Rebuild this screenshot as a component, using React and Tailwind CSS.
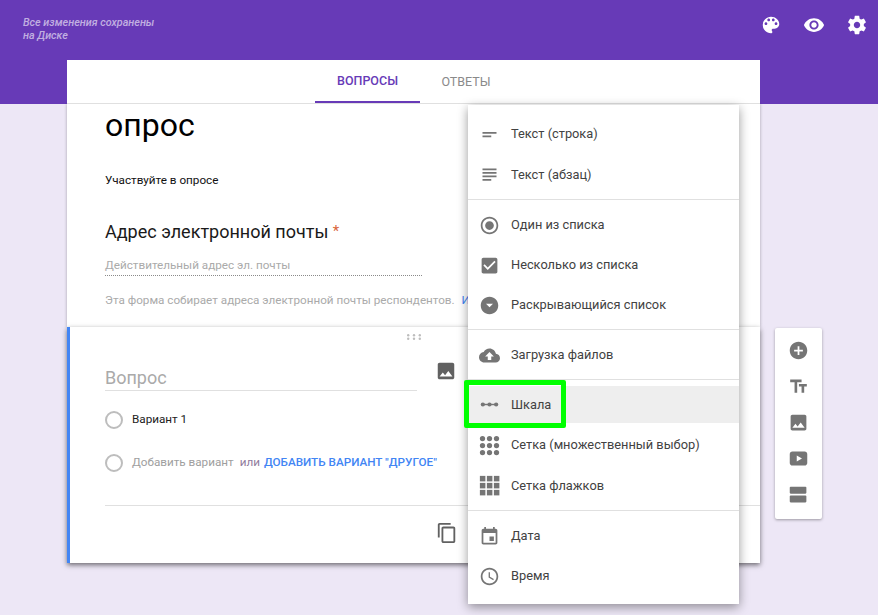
import React from 'react';

const Icon = ({ d, className = 'w-[21px] h-[21px] fill-[#757575]', children }) => (
  <svg viewBox="0 0 24 24" className={`shrink-0 ${className}`}>
    {d ? <path d={d} /> : children}
  </svg>
);

const icons = {
  palette: 'M12 3c-4.97 0-9 4.03-9 9s4.03 9 9 9c.83 0 1.5-.67 1.5-1.5 0-.39-.15-.74-.39-1.01-.23-.26-.38-.61-.38-.99 0-.83.67-1.5 1.5-1.5H16c2.76 0 5-2.24 5-5 0-4.42-4.03-8-9-8zm-5.5 9c-.83 0-1.5-.67-1.5-1.5S5.67 9 6.5 9 8 9.67 8 10.5 7.33 12 6.5 12zm3-4C8.67 8 8 7.33 8 6.5S8.67 5 9.5 5s1.5.67 1.5 1.5S10.33 8 9.5 8zm5 0c-.83 0-1.5-.67-1.5-1.5S13.67 5 14.5 5s1.5.67 1.5 1.5S15.33 8 14.5 8zm3 4c-.83 0-1.5-.67-1.5-1.5S16.67 9 17.5 9s1.5.67 1.5 1.5-.67 1.5-1.5 1.5z',
  eye: 'M12 4.5C7 4.5 2.73 7.61 1 12c1.73 4.39 6 7.5 11 7.5s9.27-3.11 11-7.5c-1.73-4.39-6-7.5-11-7.5zM12 17c-2.76 0-5-2.24-5-5s2.24-5 5-5 5 2.24 5 5-2.24 5-5 5zm0-8c-1.66 0-3 1.34-3 3s1.34 3 3 3 3-1.34 3-3-1.34-3-3-3z',
  gear: 'M19.43 12.98c.04-.32.07-.64.07-.98s-.03-.66-.07-.98l2.11-1.65c.19-.15.24-.42.12-.64l-2-3.46c-.12-.22-.39-.3-.61-.22l-2.49 1c-.52-.4-1.08-.73-1.69-.98l-.38-2.65C14.46 2.18 14.25 2 14 2h-4c-.25 0-.46.18-.49.42l-.38 2.65c-.61.25-1.17.59-1.69.98l-2.49-1c-.23-.09-.49 0-.61.22l-2 3.46c-.13.22-.07.49.12.64l2.11 1.65c-.04.32-.07.65-.07.98s.03.66.07.98l-2.11 1.65c-.19.15-.24.42-.12.64l2 3.46c.12.22.39.3.61.22l2.49-1c.52.4 1.08.73 1.69.98l.38 2.65c.03.24.24.42.49.42h4c.25 0 .46-.18.49-.42l.38-2.65c.61-.25 1.17-.59 1.69-.98l2.49 1c.23.09.49 0 .61-.22l2-3.46c.12-.22.07-.49-.12-.64l-2.11-1.65zM12 15.5c-1.93 0-3.5-1.57-3.5-3.5s1.57-3.5 3.5-3.5 3.5 1.57 3.5 3.5-1.57 3.5-3.5 3.5z',
  shortText: 'M4 9h16v2H4zm0 4h10v2H4z',
  subject: 'M14 17H4v2h10v-2zm6-8H4v2h16V9zM4 15h16v-2H4v2zM4 5v2h16V5H4z',
  radio: 'M12 7c-2.76 0-5 2.24-5 5s2.24 5 5 5 5-2.24 5-5-2.24-5-5-5zm0-5C6.48 2 2 6.48 2 12s4.48 10 10 10 10-4.48 10-10S17.52 2 12 2zm0 18c-4.42 0-8-3.58-8-8s3.58-8 8-8 8 3.58 8 8-3.58 8-8 8z',
  checkBox: 'M19 3H5c-1.11 0-2 .9-2 2v14c0 1.1.89 2 2 2h14c1.11 0 2-.9 2-2V5c0-1.1-.89-2-2-2zm-9 14l-5-5 1.41-1.41L10 14.17l7.59-7.59L19 8l-9 9z',
  dropCircle: 'M12 2C6.48 2 2 6.48 2 12s4.48 10 10 10 10-4.48 10-10S17.52 2 12 2zm0 12l-4-4h8l-4 4z',
  cloud: 'M19.35 10.04C18.67 6.59 15.64 4 12 4 9.11 4 6.6 5.64 5.35 8.04 2.34 8.36 0 10.91 0 14c0 3.31 2.69 6 6 6h13c2.76 0 5-2.24 5-5 0-2.64-2.05-4.78-4.65-4.96zM14 13v4h-4v-4H7l5-5 5 5h-3z',
  event: 'M17 12h-5v5h5v-5zM16 1v2H8V1H6v2H5c-1.11 0-1.99.9-1.99 2L3 19c0 1.1.89 2 2 2h14c1.1 0 2-.9 2-2V5c0-1.1-.9-2-2-2h-1V1h-2zm3 18H5V8h14v11z',
  clock: 'M11.99 2C6.47 2 2 6.48 2 12s4.47 10 9.99 10C17.52 22 22 17.52 22 12S17.52 2 11.99 2zM12 20c-4.42 0-8-3.58-8-8s3.58-8 8-8 8 3.58 8 8-3.58 8-8 8zm.5-13H11v6l5.25 3.15.75-1.23-4.5-2.67z',
  add: 'M12 2C6.48 2 2 6.48 2 12s4.48 10 10 10 10-4.48 10-10S17.52 2 12 2zm5 11h-4v4h-2v-4H7v-2h4V7h2v4h4v2z',
  title: 'M2.500 4v3h5v12h3V7h5V4h-13zm19 5h-9v3h3v7h3v-7h3V9z',
  image: 'M21 19V5c0-1.1-.9-2-2-2H5c-1.1 0-2 .9-2 2v14c0 1.1.9 2 2 2h14c1.1 0 2-.9 2-2zM8.5 13.5l2.5 3.01L14.5 12l4.5 6H5l3.5-4.5z',
  video: 'M19 4H5C3.3 4 2 5.3 2 7v10c0 1.7 1.300 3 3 3h14c1.700 0 3-1.300 3-3V7c0-1.700-1.300-3-3-3zM10 15.500v-7l6 3.500-6 3.500z',
  agenda: 'M20 13H3c-.55 0-1 .45-1 1v6c0 .55.45 1 1 1h17c.55 0 1-.45 1-1v-6c0-.55-.45-1-1-1zm0-10H3c-.55 0-1 .45-1 1v6c0 .55.45 1 1 1h17c.55 0 1-.45 1-1V4c0-.55-.45-1-1-1z',
  copy: 'M16 1H4c-1.1 0-2 .9-2 2v14h2V3h12V1zm3 4H8c-1.1 0-2 .9-2 2v14c0 1.1.9 2 2 2h11c1.1 0 2-.9 2-2V7c0-1.1-.9-2-2-2zm0 16H8V7h11v14z',
};

const ScaleIcon = () => (
  <Icon>
    <rect x="3" y="11.200" width="18" height="1.600" />
    <circle cx="4.400" cy="12" r="2.400" />
    <circle cx="12" cy="12" r="2.400" />
    <circle cx="19.600" cy="12" r="2.400" />
  </Icon>
);

const GRID = [4, 12, 20];

const DotsIcon = () => (
  <Icon>
    {GRID.map((y) => GRID.map((x) => <circle key={`${x}-${y}`} cx={x} cy={y} r="3" />))}
  </Icon>
);

const SquaresIcon = () => (
  <Icon>
    {GRID.map((y) => GRID.map((x) => <rect key={`${x}-${y}`} x={x - 3} y={y - 3} width="6.300" height="6.300" />))}
  </Icon>
);

const MenuRow = ({ icon, label, className = 'h-10', labelClass = '' }) => (
  <div className={`flex items-center pl-[11px] gap-[11px] text-[12.800px] text-[#424242] ${className}`}>
    {icon}
    <span className={labelClass}>{label}</span>
  </div>
);

const Divider = () => <div className="h-px bg-[#e0e0e0]" />;

const TypeMenu = () => (
  <div className="absolute left-[468px] top-[105px] z-20 w-[271px] h-[499px] bg-white shadow-[0_3px_10px_rgba(0,0,0,0.4)]">
    <div className="pt-[9px] pb-[5px]">
      <MenuRow icon={<Icon d={icons.shortText} />} label="Текст (строка)" />
      <MenuRow icon={<Icon d={icons.subject} />} label="Текст (абзац)" labelClass="translate-y-px" />
    </div>
    <Divider />
    <div className="pt-[5px] pb-[4px]">
      <MenuRow icon={<Icon d={icons.radio} />} label="Один из списка" />
      <MenuRow icon={<Icon d={icons.checkBox} />} label="Несколько из списка" />
      <MenuRow icon={<Icon d={icons.dropCircle} />} label="Раскрывающийся список" />
    </div>
    <Divider />
    <div className="pt-[5px] pb-[4px]">
      <MenuRow icon={<Icon d={icons.cloud} />} label="Загрузка файлов" />
    </div>
    <Divider />
    <div className="pt-[6px] pb-[5px]">
      <MenuRow icon={<ScaleIcon />} label="Шкала" className="h-[37px] mb-[2px] bg-[#eeeeee]" />
      <MenuRow icon={<DotsIcon />} label="Сетка (множественный выбор)" />
      <MenuRow icon={<SquaresIcon />} label="Сетка флажков" labelClass="translate-y-px" />
    </div>
    <Divider />
    <div className="pt-[5px]">
      <MenuRow icon={<Icon d={icons.event} />} label="Дата" />
      <MenuRow icon={<Icon d={icons.clock} />} label="Время" />
    </div>
    {/* annotation round the selected row */}
    <div className="absolute left-[-4px] top-[275px] w-[102px] h-[48px] rounded-[2px] border-[5px] border-[#00ff00]" />
  </div>
);

const RadioCircle = () => <div className="w-[18px] h-[18px] rounded-full border-2 border-[#bdbdbd] shrink-0" />;

const EmailCard = () => (
  <div className="relative z-0 h-[223px] bg-white pl-[38px] shadow-[0_0_3px_rgba(0,0,0,0.3)]">
    <div className="text-[32px] leading-[42px] text-black">опрос</div>
    <div className="mt-[26px] text-[11.700px] leading-4 text-[#111]">Участвуйте в опросе</div>
    <div className="mt-[31px] text-[18px] leading-6 text-[#1a1a1a]">
      Адрес электронной почты <span className="text-[15px] align-[2px] text-[#d9653b]">*</span>
    </div>
    <div className="mt-[13px] w-[317px] h-[19px] border-b border-dotted border-[#8a8a8a] text-[11.700px] leading-4 text-[#aaaaaa]">
      Действительный адрес эл. почты
    </div>
    <div className="mt-[16px] text-[11.700px] leading-4 text-[#aaaaaa] whitespace-nowrap">
      Эта форма собирает адреса электронной почты респондентов. <span className="ml-1 text-[#4285f4]">И</span>
    </div>
  </div>
);

const QuestionCard = () => (
  <div className="relative z-10 h-[236px] bg-white border-l-[3px] border-[#4285f4] shadow-[0_2px_5px_rgba(0,0,0,0.55)]">
    <div className="flex justify-center w-[687px] pt-[7px]">
      <svg viewBox="0 0 14 6" className="w-[14px] h-[6px] fill-[#bdbdbd]">
        {[1.2, 7, 12.8].map((x) => [1.2, 4.8].map((y) => <circle key={`${x}-${y}`} cx={x} cy={y} r="1.200" />))}
      </svg>
    </div>
    <div className="pl-[35px]">
      <div className="flex mt-[12px]">
        <div className="w-[312px] h-[39px] pt-[16px] border-b border-[#e0e0e0] text-[18px] leading-[20px] text-[#aaaaaa]">Вопрос</div>
        <Icon d={icons.image} className="w-[22px] h-[22px] fill-[#616161] ml-[18px] mt-[8px]" />
      </div>
      <div className="flex items-center gap-[9px] mt-[20px] h-[18px] text-[11.700px] text-[#212121]">
        <RadioCircle />
        <span>Вариант 1</span>
      </div>
      <div className="flex items-center gap-[9px] mt-[25px] h-[18px] text-[11.700px] whitespace-nowrap">
        <RadioCircle />
        <span className="text-[#9e9e9e]">Добавить вариант</span>
        <span className="-ml-[3px] text-[#8f7a9c]">или</span>
        <span className="-ml-[5px] font-medium text-[#4285f4]">ДОБАВИТЬ ВАРИАНТ "ДРУГОЕ"</span>
      </div>
      <div className="mt-[33px] h-px bg-[#e0e0e0]" />
      <Icon d={icons.copy} className="w-[22px] h-[22px] fill-[#616161] ml-[331px] mt-[16px]" />
    </div>
  </div>
);

const SideTools = () => (
  <div className="mt-[268px] w-[47px] h-[191px] pt-[4px] bg-white rounded-[2px] shadow-[0_1px_3px_rgba(0,0,0,0.35)] flex flex-col items-center">
    {['add', 'title', 'image', 'video', 'agenda'].map((name) => (
      <div key={name} className="h-9 flex items-center">
        <Icon d={icons[name]} />
      </div>
    ))}
  </div>
);

const App = () => {
  return (
    <div className="relative h-[615px] overflow-hidden bg-[#ede7f6] font-['Roboto',sans-serif]">
      <header className="h-[104px] bg-[#673ab7] flex justify-between items-start">
        <div className="pl-[23px] pt-[16px] text-[10.800px] leading-[13px] italic font-medium text-white/60">
          Все изменения сохранены
          <br />
          на Диске
        </div>
        <div className="flex gap-[21px] pt-[14px] pr-[10px]">
          <Icon d={icons.palette} className="w-[22px] h-[22px] fill-white" />
          <Icon d={icons.eye} className="w-[22px] h-[22px] fill-white" />
          <Icon d={icons.gear} className="w-[22px] h-[22px] fill-white" />
        </div>
      </header>

      <main className="flex gap-[15px] ml-[67px] -mt-[44px]">
        <div className="w-[693px] shrink-0">
          <nav className="relative z-10 h-[44px] bg-white flex justify-center text-[12.500px] font-medium border-b border-[#e0e0e0]">
            <div className="w-[105px] h-[43px] pt-[2px] flex items-center justify-center text-[#673ab7] border-b-2 border-[#673ab7]">ВОПРОСЫ</div>
            <div className="w-[92px] pt-[1px] flex items-center justify-center text-[#8a8a8a] font-normal">ОТВЕТЫ</div>
          </nav>
          <EmailCard />
          <QuestionCard />
        </div>
        <SideTools />
      </main>

      <TypeMenu />
    </div>
  );
};

export default App;
